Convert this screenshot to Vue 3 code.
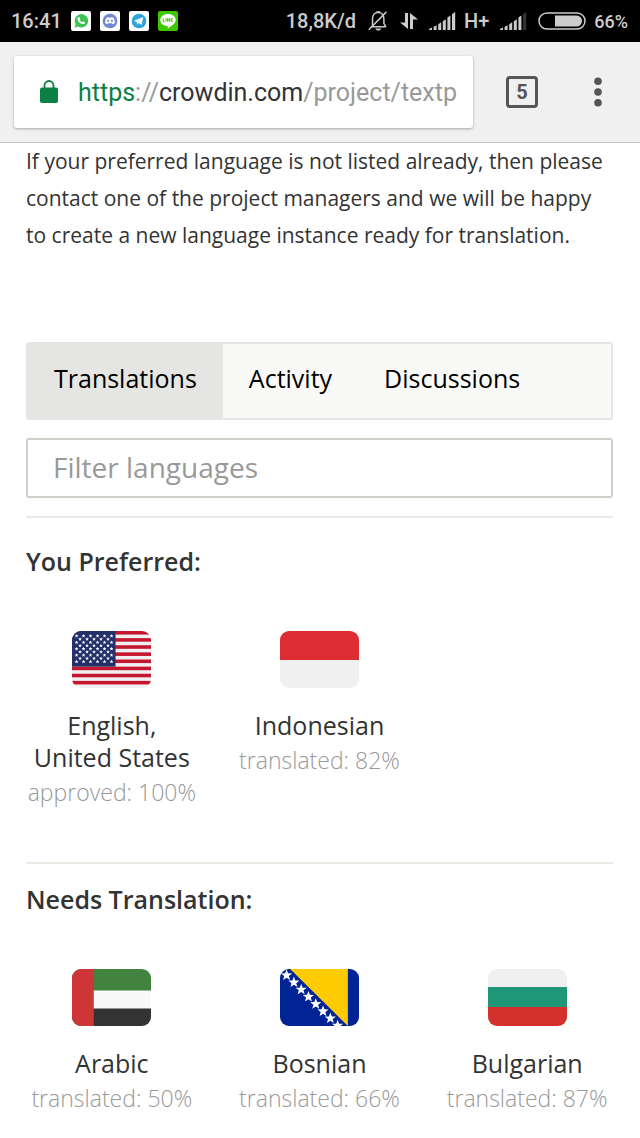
<template>
  <div class="screen">
    <header class="status-bar">
      <div class="status-left">
        <span class="clock">16:41</span>
        <svg class="app-icon" viewBox="0 0 20 20" role="img" aria-label="WhatsApp">
          <rect width="20" height="20" rx="2" fill="#fff" />
          <path d="M3.6 16.6l1-3.5a6.7 6.7 0 1 1 2.5 2.5z" fill="#3ec254" />
          <path d="M7.4 6.2l1-.2 1 2.1-.7 1a4.6 4.6 0 0 0 2.4 2.1l.9-1 2 1c-.1 1.600-1.300 2-2.300 1.800-2.700-.5-5-2.800-5.300-5.100-.1-.8.4-1.400 1-1.700z" fill="#fff" />
        </svg>
        <svg class="app-icon" viewBox="0 0 20 20" role="img" aria-label="Discord">
          <rect width="20" height="20" rx="2" fill="#fff" />
          <circle cx="10" cy="10" r="7.300" fill="#7187d4" />
          <path d="M6.600 6.800l2-.8.5.700h1.800l.5-.7 2 .8c1 1.500 1.600 3.300 1.500 5.300-.8.7-1.500 1-2.300 1.200l-.6-1.100H8l-.6 1.100c-.8-.2-1.500-.5-2.300-1.200-.1-2 .5-3.800 1.500-5.300z" fill="#fff" />
          <circle cx="8.100" cy="9.800" r="1.100" fill="#7187d4" />
          <circle cx="11.900" cy="9.800" r="1.100" fill="#7187d4" />
        </svg>
        <svg class="app-icon" viewBox="0 0 20 20" role="img" aria-label="Telegram">
          <rect width="20" height="20" rx="2" fill="#fff" />
          <circle cx="10" cy="10" r="7.300" fill="#2fa3dc" />
          <path d="M4.800 9.900l9.300-3.800-1.500 8-2.900-2-1.500 1.600-.4-2.700z" fill="#fff" />
          <path d="M7.700 11l4.700-3.400-3.700 4.200-.5 1.900z" fill="#b9def2" />
        </svg>
        <svg class="app-icon" viewBox="0 0 20 20" role="img" aria-label="LINE">
          <rect width="20" height="20" rx="2" fill="#3fc800" />
          <path d="M10 3c4.400 0 7.700 2.600 7.700 6 0 3-3.500 5.800-7.500 8.300-.5.300-.6-.2-.4-2.200C5.400 15 2.300 12.400 2.300 9c0-3.400 3.300-6 7.700-6z" fill="#fff" />
          <path d="M5.200 7.400v3h1.500M8.100 7.200v3.400M9.600 10.600V7.400l2 3V7.200M14.700 7.400h-1.500v3h1.500M13.200 8.900h1.400" fill="none" stroke="#3fc800" stroke-width="1" />
        </svg>
      </div>
      <div class="status-right">
        <span>18,8K/d</span>
        <svg width="22" height="22" viewBox="0 0 20 22" fill="none" stroke="#ccc" stroke-width="1.500">
          <path d="M3.200 16.800h14.600M4.500 16V9c0-4 2.300-6.600 5.700-6.600 3.300 0 5.700 2.600 5.700 6.600v4.300l2 3.500" />
          <path d="M8.200 1.900h4M.8 19.700L18.400 1.900" />
          <path d="M7.300 18.600h6c-.6 1.400-1.600 2-3 2s-2.400-.6-3-2z" fill="#ccc" stroke="none" />
        </svg>
        <svg width="18" height="18" viewBox="0 0 18 18" fill="#ccc">
          <path d="M5 1h3v16L0 10.500h5zM10 1l8 6.500h-5V17h-3z" />
        </svg>
        <div class="status-pair">
          <svg width="27" height="18" viewBox="0 0 27 18" fill="#ccc">
            <path d="M0 18v-1l3-1.500V18zM4.600 18v-3.300l3-1.500V18zM9.200 18v-5.800l3-2V18zM13.800 18V9.200l3-2V18zM18.400 18V5.500l3-2V18zM23 18V2.200L26.200 0v18z" />
          </svg>
          <span>H+</span>
        </div>
        <svg width="27" height="18" viewBox="0 0 27 18" fill="#ccc">
          <path d="M0 18v-1l3-1.500V18zM4.600 18v-3.300l3-1.500V18zM9.200 18v-5.800l3-2V18zM13.800 18V9.200l3-2V18zM18.400 18V5.500l3-2V18z" />
          <path d="M23 18V2.200L26.200 0v18z" fill="#333" />
        </svg>
        <div class="status-pair">
          <svg width="48" height="18" viewBox="0 0 48 18">
            <rect x="1" y="1" width="46" height="16" rx="8" fill="none" stroke="#ccc" stroke-width="1.500" />
            <path d="M17 3.500h21.500a5.500 5.500 0 0 1 0 11H17z" fill="#ccc" />
          </svg>
          <span class="battery-level">66%</span>
        </div>
      </div>
    </header>

    <div class="toolbar">
      <button class="address" type="button">
        <svg width="18" height="24" viewBox="0 0 18 24">
          <rect y="7.500" width="18" height="15.500" rx="2" fill="#0b8043" />
          <path d="M4.500 9V5.500a4.500 4.500 0 0 1 9 0V9" fill="none" stroke="#0b8043" stroke-width="1.800" />
        </svg>
        <span class="url"><span class="scheme">https</span>://<span class="host">crowdin.com</span>/project/textp</span>
      </button>
      <button class="tab-count" type="button" aria-label="Open tabs">5</button>
      <button class="menu" type="button" aria-label="Menu">
        <svg width="8" height="30" viewBox="0 0 8 30" fill="#555">
          <circle cx="4" cy="4.300" r="3.800" />
          <circle cx="4" cy="15" r="3.800" />
          <circle cx="4" cy="25.700" r="3.800" />
        </svg>
      </button>
    </div>

    <main class="page">
      <p class="intro">
        If your preferred language is not listed already, then please contact one of the project managers and we will be happy to create a new language instance ready for translation.
      </p>

      <nav class="tabs">
        <button
          v-for="tab in tabs"
          :key="tab"
          type="button"
          class="tab"
          :class="{ active: tab === activeTab }"
          @click="activeTab = tab"
        >{{ tab }}</button>
      </nav>

      <input v-model="filter" class="filter" type="text" placeholder="Filter languages" aria-label="Filter languages">

      <section v-for="group in visibleGroups" :key="group.title" class="group">
        <h2>{{ group.title }}</h2>
        <div class="languages">
          <a v-for="lang in group.languages" :key="lang.name" class="language" href="#">
            <svg class="flag" viewBox="0 0 78 57" preserveAspectRatio="none" aria-hidden="true">
              <g v-if="lang.flag === 'us'">
                <rect width="78" height="57" fill="#f0f0f0" />
                <rect v-for="n in 8" :key="n" :y="(n - 1) * 7.125" width="78" height="3.560" fill="#c4162f" />
                <rect width="43" height="35.600" fill="#233069" />
                <polygon v-for="(s, i) in usStars" :key="i" :points="starPoints(s.x, s.y, 2)" fill="#fff" />
              </g>
              <g v-else-if="lang.flag === 'id'">
                <rect width="78" height="57" fill="#f0f0f0" />
                <rect width="78" height="29" fill="#dc2d32" />
              </g>
              <g v-else-if="lang.flag === 'ae'">
                <rect width="78" height="57" fill="#f9f9f9" />
                <rect width="78" height="21.500" fill="#42843f" />
                <rect y="39.500" width="78" height="18" fill="#333" />
                <rect width="21.500" height="57" fill="#cd3536" />
              </g>
              <g v-else-if="lang.flag === 'ba'">
                <rect width="78" height="57" fill="#002395" />
                <path d="M10 0h57v57z" fill="#fecb00" />
                <polygon v-for="n in 8" :key="n" :points="starPoints(n * 7.200 - 0.700, n * 7.200 - 1, 5.800)" fill="#fff" />
              </g>
              <g v-else>
                <rect width="78" height="57" fill="#f0f0f0" />
                <rect y="18" width="78" height="20" fill="#1f9677" />
                <rect y="38" width="78" height="19" fill="#d4302c" />
              </g>
            </svg>
            <span class="name">{{ lang.name }}</span>
            <span class="progress">{{ lang.progress }}</span>
          </a>
        </div>
      </section>
    </main>
  </div>
</template>

<script setup>
import { ref, computed } from 'vue';

const tabs = ['Translations', 'Activity', 'Discussions'];
const activeTab = ref('Translations');
const filter = ref('');

const groups = [
  {
    title: 'You Preferred:',
    languages: [
      { name: 'English, United States', flag: 'us', progress: 'approved: 100%' },
      { name: 'Indonesian', flag: 'id', progress: 'translated: 82%' }
    ]
  },
  {
    title: 'Needs Translation:',
    languages: [
      { name: 'Arabic', flag: 'ae', progress: 'translated: 50%' },
      { name: 'Bosnian', flag: 'ba', progress: 'translated: 66%' },
      { name: 'Bulgarian', flag: 'bg', progress: 'translated: 87%' }
    ]
  }
];

const visibleGroups = computed(() => {
  const query = filter.value.trim().toLowerCase();
  return groups.map((group) => ({
    ...group,
    languages: group.languages.filter((lang) => lang.name.toLowerCase().includes(query))
  }));
});

// Rows alternate between 6 and 5 stars
const usStars = [];
for (let row = 0; row < 9; row++) {
  const odd = row % 2;
  for (let col = 0; col < 6 - odd; col++) {
    usStars.push({ x: 4.5 + col * 6.9 + odd * 3.45, y: 5 + row * 3.2 });
  }
}

const starPoints = (cx, cy, r) => {
  const points = [];
  for (let i = 0; i < 10; i++) {
    const radius = i % 2 ? r * 0.42 : r;
    const angle = (i * Math.PI) / 5 - Math.PI / 2;
    points.push(`${cx + radius * Math.cos(angle)},${cy + radius * Math.sin(angle)}`);
  }
  return points.join(' ');
};
</script>

<style>
body {
  margin: 0;
  background: #ffffff;
}
</style>

<style scoped>
.screen {
  font-family: 'Open Sans', sans-serif;
  color: #333333;
}

button {
  font: inherit;
  border: none;
  padding: 0;
  cursor: pointer;
}

svg {
  display: block;
  flex: none;
}

.status-bar {
  display: flex;
  justify-content: space-between;
  align-items: center;
  height: 42px;
  padding: 0 12px 0 11px;
  box-sizing: border-box;
  background: #000000;
  color: #cccccc;
  font-family: Roboto, sans-serif;
  font-size: 20px;
  font-weight: 500;
}

.status-left,
.status-right,
.status-pair {
  display: flex;
  align-items: center;
}

.status-left {
  gap: 9px;
}

.status-right {
  gap: 11px;
}

.status-pair {
  gap: 8px;
}

.battery-level {
  font-size: 18px;
}

.app-icon {
  width: 20px;
  height: 20px;
}

.toolbar {
  display: flex;
  align-items: center;
  padding: 14px 36px 14px 14px;
  background: #f0f0f0;
  border-bottom: 1px solid #c4c4c4;
  font-family: Roboto, sans-serif;
}

.address {
  flex: 1;
  min-width: 0;
  display: flex;
  align-items: center;
  gap: 20px;
  height: 72px;
  padding: 0 12px 0 26px;
  background: #ffffff;
  border-radius: 3px;
  box-shadow: 0 1px 3px rgba(0, 0, 0, 0.3);
}

.url {
  overflow: hidden;
  white-space: nowrap;
  font-size: 25px;
  color: #999999;
}

.scheme {
  color: #0b8043;
}

.host {
  color: #333333;
}

.tab-count {
  width: 32px;
  height: 32px;
  margin: 0 54px 0 33px;
  box-sizing: border-box;
  border: 3px solid #555555;
  border-radius: 4px;
  background: none;
  color: #555555;
  font-size: 20px;
  font-weight: 700;
  line-height: 26px;
}

.menu {
  padding: 0 2px;
  background: none;
}

.page {
  padding: 0 27px 21px 26px;
}

.intro {
  margin: 0 0 88px;
  font-size: 21px;
  line-height: 37px;
}

.tabs {
  display: flex;
  height: 78px;
  margin-bottom: 18px;
  box-sizing: border-box;
  border: 2px solid #e5e5e3;
  border-radius: 3px;
  background: #f9f9f7;
}

.tab {
  padding: 0 26px 6px;
  background: none;
  color: #000000;
  font-size: 25px;
}

.tab.active {
  background: #e5e5e3;
}

.filter {
  display: block;
  width: 100%;
  height: 60px;
  margin-bottom: 18px;
  padding: 0 25px 2px;
  box-sizing: border-box;
  border: 2px solid #cdd0c9;
  border-radius: 3px;
  background: #ffffff;
  color: #333333;
  font-family: inherit;
  font-size: 28px;
}

.filter::placeholder {
  color: #999999;
  opacity: 1;
}

.group {
  padding-top: 12px;
  border-top: 2px solid #eaeae5;
}

.group:first-of-type {
  padding-top: 20px;
}

.group + .group {
  margin-top: 51px;
}

h2 {
  margin: 0 0 47px;
  font-size: 25px;
  font-weight: 600;
  line-height: 46px;
}

.languages {
  display: grid;
  grid-template-columns: repeat(3, 1fr);
  margin: 0 -18px;
}

.language {
  display: flex;
  flex-direction: column;
  align-items: center;
  padding: 0 18px;
  color: #333333;
  text-align: center;
  text-decoration: none;
}

.flag {
  width: 79px;
  height: 57px;
  margin-bottom: 21px;
  border-radius: 9px;
}

.name {
  padding: 0 6px;
  font-size: 25px;
  line-height: 32px;
}

.progress {
  color: #999999;
  font-size: 23px;
  font-weight: 300;
  line-height: 38px;
  white-space: nowrap;
}
</style>
